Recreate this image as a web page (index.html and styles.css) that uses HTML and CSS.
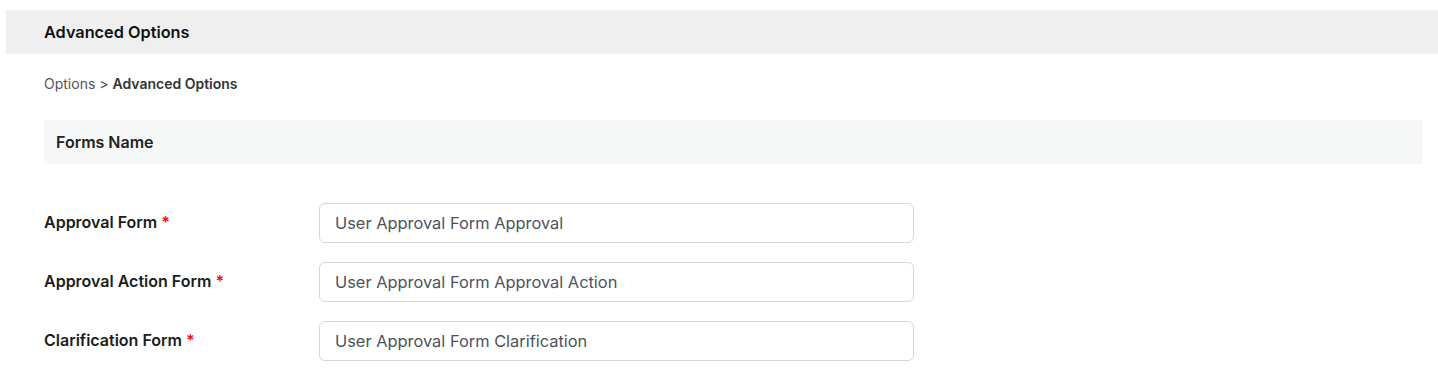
FILE: index.html
```html
<!DOCTYPE html>
<html lang="en">
<head>
  <meta charset="UTF-8" />
  <meta name="viewport" content="width=device-width, initial-scale=1.0" />
  <title>Advanced Options</title>
  <link rel="stylesheet" href="styles.css">
</head>
<body>

<div class="page">
  <div class="header">Advanced Options</div>

  <div class="content">
    <div class="breadcrumb">
      <span class="crumb">Options</span> &gt; <span class="current">Advanced Options</span>
    </div>

    <div class="section-title">Forms Name</div>

    <div class="form">
      <div class="row">
        <label>Approval Form <span class="req">*</span></label>
        <input type="text" value="User Approval Form Approval" />
      </div>
      <div class="row">
        <label>Approval Action Form <span class="req">*</span></label>
        <input type="text" value="User Approval Form Approval Action" />
      </div>
      <div class="row">
        <label>Clarification Form <span class="req">*</span></label>
        <input type="text" value="User Approval Form Clarification" />
      </div>
    </div>
  </div>
</div>

</body>
</html>
```

FILE: styles.css
```css
body {
  margin: 0;
  font-family: 'Inter', 'Liberation Sans', sans-serif;
  background: white;
  color: #1f2328;
}
.page {
  padding: 10px 0 0 6px;
}
.header {
  height: 44px;
  line-height: 44px;
  background: #efefef;
  padding-left: 38px;
  font-size: 16.3px;
  font-weight: 600;
  color: #111;
}
.content {
  padding: 0 16px 0 38px;
}
.breadcrumb {
  margin-top: 20px;
  line-height: 20px;
  font-size: 14px;
  color: #555;
}
.breadcrumb .current {
  font-weight: 600;
  color: #333;
}
.section-title {
  margin-top: 26px;
  height: 44px;
  line-height: 44px;
  background: #f6f7f7;
  padding-left: 12px;
  font-size: 16px;
  font-weight: 600;
  color: #222;
}
.form {
  margin-top: 39px;
  display: flex;
  flex-direction: column;
  gap: 19px;
}
.row {
  display: flex;
  align-items: center;
}
.row label {
  width: 275px;
  font-size: 16px;
  font-weight: 600;
  color: #1a1d21;
  padding-bottom: 2px;
}
.req {
  color: #f01010;
}
.row input {
  width: 595px;
  height: 40px;
  box-sizing: border-box;
  border: 1px solid #d4d6da;
  border-radius: 6px;
  padding: 0 15px;
  font-family: inherit;
  font-size: 16.4px;
  color: #4b5260;
  outline: none;
}
```
